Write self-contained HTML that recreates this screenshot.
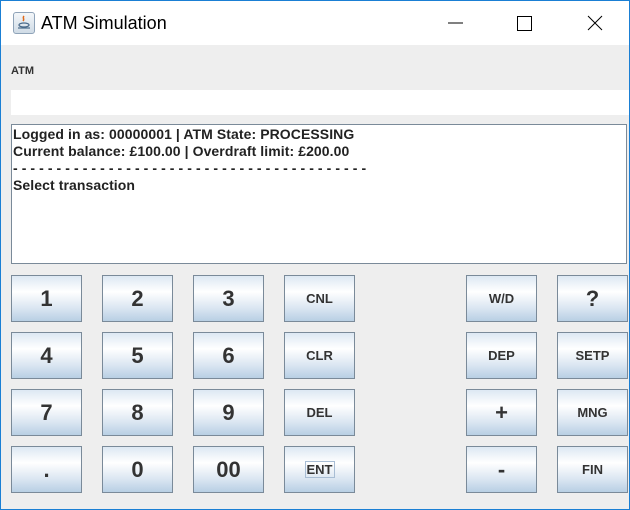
<!DOCTYPE html>
<html><head><meta charset="utf-8"><style>
*{margin:0;padding:0;box-sizing:border-box}
body{width:630px;height:510px;position:relative;background:#eeeeee;font-family:"Liberation Sans",Arial,sans-serif;overflow:hidden}
.win{position:absolute;left:0;top:0;width:630px;height:510px;border:1px solid #1a7fd4}
.title{position:absolute;left:1px;top:1px;width:628px;height:44px;background:#fff}
.ttext{position:absolute;left:40px;top:12px;font-size:18px;color:#000;font-family:"Liberation Sans",sans-serif}
.icon{position:absolute;left:12px;top:11px;width:22px;height:22px;border:1px solid #8fa3b8;border-radius:3px;background:linear-gradient(#f4f7fa,#cfdbe6)}
.lbl{position:absolute;left:11px;top:65px;font-size:11px;font-weight:bold;color:#333}
.field{position:absolute;left:11px;top:90px;width:618px;height:25px;background:#fff}
.ta{position:absolute;left:11px;top:124px;width:616px;height:140px;background:#fff;border:1px solid #7a8a99;padding:1px 0 0 1px;font-size:14px;font-weight:bold;color:#222;line-height:17px;white-space:pre;letter-spacing:0.08px}
.b{position:absolute;width:71px;height:47px;border:1px solid #7a8a99;background:linear-gradient(#dde8f3 0%,#ffffff 35%,#dce7f2 70%,#b8cfe4 100%);display:flex;align-items:center;justify-content:center;font-weight:bold;color:#333}
.n{font-size:22px}.t{font-size:13px}
.ent{border:1px solid #a8bdd4;padding:0 1px}
</style></head><body>
<div class="win"></div>
<div class="title">
<div class="icon"><svg width="20" height="20" viewBox="0 0 20 20"><path d="M10 3c-2 2 1 3-1 5" stroke="#e06a1a" stroke-width="1.5" fill="none"/><ellipse cx="10" cy="12" rx="5" ry="2" fill="none" stroke="#4a6a8a" stroke-width="1.2"/><path d="M4 15h12" stroke="#4a6a8a" stroke-width="1.2"/></svg></div>
<div class="ttext">ATM Simulation</div>
<svg style="position:absolute;left:440px;top:0" width="190" height="45"><path d="M7 22h15" stroke="#000" stroke-width="1"/><rect x="76.5" y="15.5" width="14" height="14" fill="none" stroke="#000"/><path d="M147 15l14 14M161 15l-14 14" stroke="#000" stroke-width="1"/></svg>
</div>
<div class="lbl">ATM</div>
<div class="field"></div>
<div class="ta">Logged in as: 00000001 | ATM State: PROCESSING
Current balance: £100.00 | Overdraft limit: £200.00
- - - - - - - - - - - - - - - - - - - - - - - - - - - - - - - - - - - - - - - - -
Select transaction</div>

<div class="b n" style="left:11px;top:275px">1</div>
<div class="b n" style="left:102px;top:275px">2</div>
<div class="b n" style="left:193px;top:275px">3</div>
<div class="b t" style="left:284px;top:275px">CNL</div>
<div class="b t" style="left:466px;top:275px">W/D</div>
<div class="b n" style="left:557px;top:275px">?</div>

<div class="b n" style="left:11px;top:332px">4</div>
<div class="b n" style="left:102px;top:332px">5</div>
<div class="b n" style="left:193px;top:332px">6</div>
<div class="b t" style="left:284px;top:332px">CLR</div>
<div class="b t" style="left:466px;top:332px">DEP</div>
<div class="b t" style="left:557px;top:332px">SETP</div>

<div class="b n" style="left:11px;top:389px">7</div>
<div class="b n" style="left:102px;top:389px">8</div>
<div class="b n" style="left:193px;top:389px">9</div>
<div class="b t" style="left:284px;top:389px">DEL</div>
<div class="b n" style="left:466px;top:389px">+</div>
<div class="b t" style="left:557px;top:389px">MNG</div>

<div class="b n" style="left:11px;top:446px">.</div>
<div class="b n" style="left:102px;top:446px">0</div>
<div class="b n" style="left:193px;top:446px">00</div>
<div class="b t" style="left:284px;top:446px"><span class="ent">ENT</span></div>
<div class="b n" style="left:466px;top:446px">-</div>
<div class="b t" style="left:557px;top:446px">FIN</div>
</body></html>
